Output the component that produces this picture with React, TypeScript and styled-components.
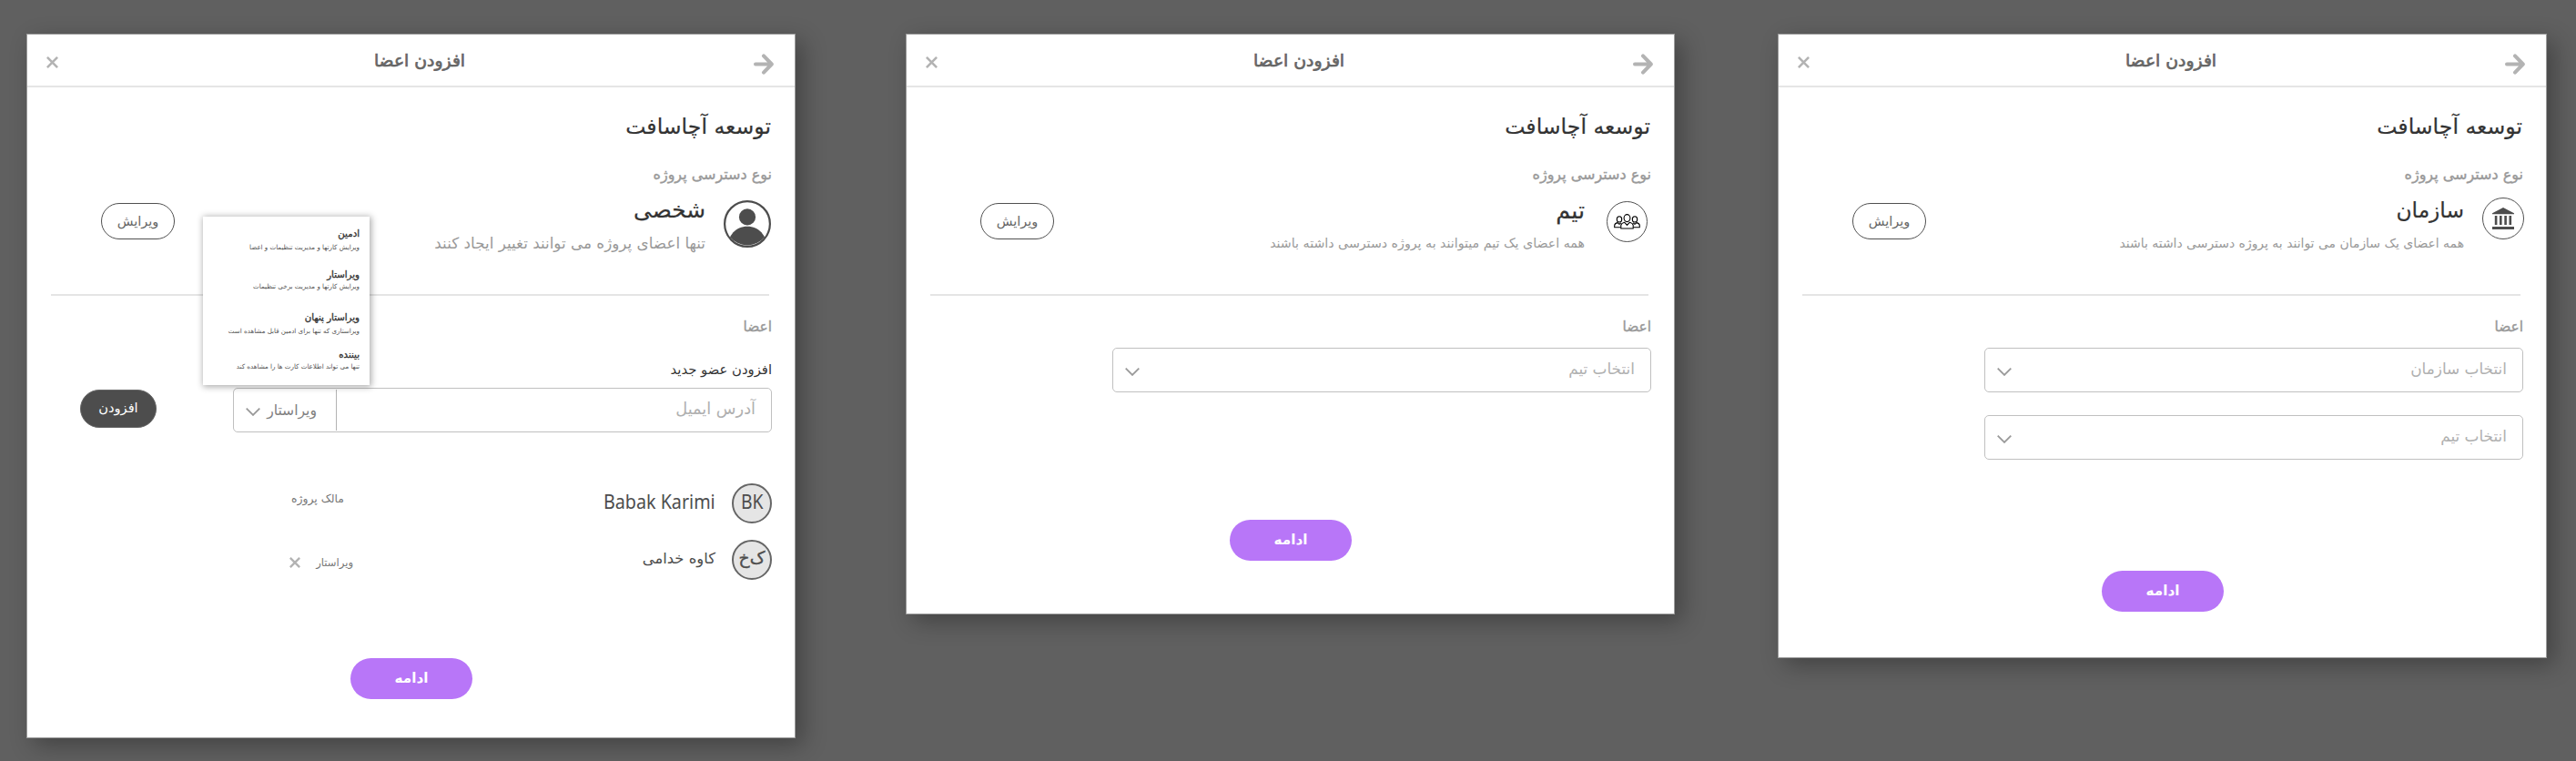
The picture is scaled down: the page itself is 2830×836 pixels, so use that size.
import React from "react";
import styled, { createGlobalStyle } from "styled-components";

const GlobalStyle = createGlobalStyle`
  *, *::before, *::after { box-sizing: border-box; }
  html, body { margin: 0; background: #606060; }
  body { font-family: "DejaVu Sans", sans-serif; }
  button { font-family: inherit; margin: 0; padding: 0; cursor: pointer; }
`;

const Board = styled.main`
  display: flex;
  align-items: flex-start;
  width: 2830px;
  height: 836px;
  padding: 37px 0 0 29px;
  background: #606060;
  overflow: hidden;
`;

const Card = styled.section<{ $height: number; $gap?: number }>`
  display: flex;
  flex-direction: column;
  flex: none;
  width: 845px;
  height: ${(p) => p.$height}px;
  margin-left: ${(p) => p.$gap ?? 0}px;
  background: #fff;
  background-clip: padding-box;
  border: 1px solid #9c9c9c;
  box-shadow: 8px 8px 24px rgba(0, 0, 0, 0.3);
`;

const Header = styled.header`
  display: flex;
  align-items: center;
  flex: none;
  height: 58px;
  padding: 0 23px 0 21px;
  border-bottom: 2px solid #e5e5e5;
`;

const HeaderTitle = styled.h1`
  flex: 1;
  margin: 0;
  padding: 1px 0 0 30px;
  text-align: center;
  font-size: 18.8px;
  font-weight: 400;
  line-height: 28px;
  color: #666;
  -webkit-text-stroke: 0.7px #666;
`;

const IconButton = styled.button<{ $drop?: number }>`
  display: flex;
  border: 0;
  background: none;
  margin-top: ${(p) => p.$drop ?? 0}px;
`;

const Body = styled.div`
  display: flex;
  flex-direction: column;
  flex: 1;
  padding: 25px 25px 0 26px;
`;

const ProjectName = styled.h2`
  margin: 0;
  padding-right: 1px;
  font-size: 23.6px;
  font-weight: 400;
  line-height: 36px;
  color: #333;
  -webkit-text-stroke: 0.2px #333;
`;

const Label = styled.div<{ $size: number; $top: number; $dark?: boolean }>`
  margin-top: ${(p) => p.$top}px;
  font-size: ${(p) => p.$size}px;
  line-height: 20px;
  color: ${(p) => (p.$dark ? "#333" : "#999")};
  -webkit-text-stroke: ${(p) => (p.$dark ? "0" : "0.4px #999")};
`;

const AccessRow = styled.div`
  display: flex;
  align-items: flex-start;
  height: 121px;
`;

const AccessIcon = styled.span<{ $top: number; $start: number; $end: number }>`
  display: flex;
  flex: none;
  margin-top: ${(p) => p.$top}px;
  margin-inline-start: ${(p) => p.$start}px;
  margin-inline-end: ${(p) => p.$end}px;
`;

const RoundFrame = styled.span<{ $size: number }>`
  display: flex;
  align-items: center;
  justify-content: center;
  width: ${(p) => p.$size}px;
  height: ${(p) => p.$size}px;
  border: 1px solid #505050;
  border-radius: 50%;
`;

const AccessText = styled.div`
  padding-top: 13px;
  white-space: nowrap;
`;

const AccessName = styled.div<{ $size: number }>`
  font-size: ${(p) => p.$size}px;
  line-height: 32px;
  color: #333;
  -webkit-text-stroke: 0.2px #333;
`;

const AccessHint = styled.div<{ $size: number }>`
  margin-top: 8px;
  font-size: ${(p) => p.$size}px;
  line-height: 24px;
  color: #999;
`;

const EditButton = styled.button`
  width: 81px;
  height: 40px;
  margin: 21px auto 0 55px;
  border: 1px solid #505050;
  border-radius: 20px;
  background: #fff;
  color: #666;
  font-size: 14.5px;
  line-height: 20px;
`;

const Divider = styled.hr`
  width: calc(100% - 3px);
  height: 2px;
  margin: 0 3px 0 0;
  border: 0;
  background: #e5e5e5;
`;

const Field = styled.div<{ $top: number }>`
  display: flex;
  align-items: stretch;
  flex: none;
  width: 592px;
  height: 49px;
  margin-top: ${(p) => p.$top}px;
  border: 1px solid #c0c0c0;
  border-radius: 5px;
  background: #fff;
`;

const Placeholder = styled.span<{ $size: number; $lift: number }>`
  flex: 1;
  padding-inline-start: 17px;
  padding-bottom: ${(p) => p.$lift}px;
  align-self: center;
  font-size: ${(p) => p.$size}px;
  line-height: 30px;
  color: #b0b0b0;
`;

const ChevronBox = styled.span`
  display: flex;
  align-items: center;
  padding: 3px 0 0 13px;
`;

const InviteRow = styled.div`
  display: flex;
  align-items: flex-start;
  justify-content: space-between;
  padding-left: 32px;
`;

const AddButton = styled.button`
  width: 84px;
  height: 42px;
  margin-top: 12px;
  border: 1px solid #666;
  border-radius: 21px;
  background: #4d4d4d;
  color: #fff;
  font-size: 14.6px;
  padding-bottom: 3px;
`;

const RoleSelect = styled.div`
  position: relative;
  display: flex;
  align-items: center;
  justify-content: space-between;
  width: 113px;
  margin: 1px 0;
  padding-right: 21px;
  border-right: 1px solid #b3b3b3;
  font-size: 15.6px;
  line-height: 24px;
  color: #808080;
`;

const RoleMenu = styled.ul`
  position: absolute;
  left: -34px;
  bottom: 50px;
  width: 183px;
  height: 185px;
  margin: 0;
  padding: 11px 11px 0 0;
  list-style: none;
  background: #fff;
  box-shadow: 1px 1px 7px 1px rgba(0, 0, 0, 0.33);
`;

const RoleItem = styled.li<{ $height: number; $hintTop: number }>`
  height: ${(p) => p.$height}px;
  white-space: nowrap;

  strong {
    display: block;
    font-size: 10.2px;
    font-weight: 400;
    line-height: 16px;
    color: #333;
    -webkit-text-stroke: 0.35px #333;
  }

  small {
    display: block;
    margin-top: ${(p) => p.$hintTop}px;
    font-size: 7.1px;
    line-height: 12px;
    color: #555;
  }
`;

const Members = styled.div`
  display: flex;
  flex-direction: column;
  gap: 18px;
  margin-top: 56px;
`;

const Member = styled.div`
  display: flex;
  align-items: center;
  height: 44px;
`;

const Avatar = styled.span<{ $latin?: boolean }>`
  display: flex;
  align-items: center;
  justify-content: center;
  flex: none;
  width: 44px;
  height: 44px;
  border: 2px solid #666;
  border-radius: 50%;
  background: #e5e5e5;
  color: #4d4d4d;
  font-family: ${(p) => (p.$latin ? '"Noto Sans", sans-serif' : '"DejaVu Sans", sans-serif')};
  font-size: ${(p) => (p.$latin ? 22.5 : 18.8)}px;
  line-height: 30px;
  -webkit-text-stroke: ${(p) => (p.$latin ? "0" : "0.4px #4d4d4d")};

  span {
    flex: none;
    transform: scaleX(${(p) => (p.$latin ? 0.86 : 1)});
    padding-bottom: ${(p) => (p.$latin ? 4 : 5)}px;
  }
`;

const MemberName = styled.span<{ $latin?: boolean }>`
  flex: 1;
  padding-inline-start: 18px;
  color: #4d4d4d;
  font-family: ${(p) => (p.$latin ? '"Noto Sans", sans-serif' : '"DejaVu Sans", sans-serif')};
  font-size: ${(p) => (p.$latin ? 21.8 : 16.4)}px;
  line-height: 30px;
  padding-bottom: ${(p) => (p.$latin ? 4 : 3)}px;

  span {
    display: inline-block;
    transform: scaleX(${(p) => (p.$latin ? 0.905 : 1)});
    transform-origin: right center;
  }
`;

const MemberRole = styled.span<{ $size: number; $start: number; $shift: number }>`
  display: flex;
  align-items: center;
  gap: 17px;
  width: 332px;
  padding-inline-start: ${(p) => p.$start}px;
  margin-top: ${(p) => p.$shift}px;
  font-size: ${(p) => p.$size}px;
  line-height: 20px;
  color: #777;
`;

const Footer = styled.footer<{ $bottom: number }>`
  display: flex;
  justify-content: center;
  margin-top: auto;
  padding-bottom: ${(p) => p.$bottom}px;
`;

const ContinueButton = styled.button`
  width: 134px;
  height: 45px;
  padding-bottom: 1px;
  border: 0;
  border-radius: 22.5px;
  background: #b876f8;
  color: #fff;
  font-size: 15.2px;
  font-weight: 700;
`;

const ArrowIcon = () => (
  <svg width="22" height="23" viewBox="0 0 22 23" fill="none" stroke="#b3b3b3" strokeWidth="4" strokeLinecap="round" strokeLinejoin="round">
    <path d="M2 11.5H19M11 2.4L19.8 11.5L11 20.6" />
  </svg>
);

const CloseIcon = ({ size }: { size: number }) => (
  <svg width={size} height={size} viewBox="0 0 13 13" stroke="#b3b3b3" strokeWidth="2.6">
    <path d="M0.9 0.9L12.1 12.1M12.1 0.9L0.9 12.1" />
  </svg>
);

const ChevronIcon = () => (
  <svg width="16" height="9" viewBox="0 0 16 9" fill="none" stroke="#999" strokeWidth="1.8">
    <path d="M0.7 0.7L8 7.9L15.3 0.7" />
  </svg>
);

const PersonIcon = () => (
  <svg width="52" height="52" viewBox="0 0 52 52">
    <circle cx="26" cy="26" r="24.9" fill="#fff" stroke="#4d4d4d" strokeWidth="2.2" />
    <circle cx="26" cy="18.4" r="9.1" fill="#4d4d4d" />
    <path d="M7 40.5C11.5 32 18 28.8 26 28.8S40.5 32 45 40.5A24.6 24.6 0 0 1 7 40.5Z" fill="#4d4d4d" />
  </svg>
);

const TeamIcon = () => (
  <svg width="29" height="17" viewBox="0 0 29 17" fill="none" stroke="#000" strokeWidth="1.1" strokeLinejoin="round">
    <ellipse cx="14.5" cy="4.6" rx="3.4" ry="4" />
    <ellipse cx="6" cy="5.9" rx="2.7" ry="3.1" />
    <ellipse cx="23" cy="5.9" rx="2.7" ry="3.1" />
    <path d="M7.8 16V12.4C8.1 10.6 9.6 9.9 11.7 9.3L14.5 12.4L17.3 9.3C19.4 9.9 20.9 10.6 21.2 12.4V16Z" />
    <path d="M7.6 14.8H0.7V12.6C0.9 10.9 2.3 10 4 9.6L6 11.4L7.8 9.8" />
    <path d="M21.4 14.8H28.3V12.6C28.1 10.9 26.7 10 25 9.6L23 11.4L21.2 9.8" />
  </svg>
);

const BankIcon = () => (
  <svg width="24" height="24" viewBox="0 0 24 24" fill="#4d4d4d">
    <path d="M12 0L24 6.2V7.2H0V6.2ZM2.8 9H5.4V19H2.8ZM8 9H10.6V19H8ZM13.3 9H15.9V19H13.3ZM18.5 9H21.1V19H18.5ZM0 21H24V24H0Z" />
  </svg>
);

const roles = [
  { name: "ادمین", hint: "ویرایش کارتها و مدیریت تنظیمات و اعضا", height: 45, hintTop: 1 },
  { name: "ویراستار", hint: "ویرایش کارتها و مدیریت برخی تنظیمات", height: 47, hintTop: -1 },
  { name: "ویراستار پنهان", hint: "ویراستاری که تنها برای ادمین قابل مشاهده است", height: 40.5, hintTop: 1 },
  { name: "بیننده", hint: "تنها می تواند اطلاعات کارت ها را مشاهده کند", height: 40, hintTop: -1 },
];

type DialogProps = {
  height: number;
  gap?: number;
  footer: number;
  access: string;
  accessSize: number;
  hint: string;
  hintSize: number;
  icon: React.ReactNode;
  children: React.ReactNode;
};

const Dialog = ({ height, gap, footer, access, accessSize, hint, hintSize, icon, children }: DialogProps) => (
  <Card dir="rtl" $height={height} $gap={gap}>
    <Header>
      <IconButton $drop={8} aria-label="بازگشت">
        <ArrowIcon />
      </IconButton>
      <HeaderTitle>افزودن اعضا</HeaderTitle>
      <IconButton $drop={4} aria-label="بستن">
        <CloseIcon size={13} />
      </IconButton>
    </Header>
    <Body>
      <ProjectName>توسعه آچاسافت</ProjectName>
      <Label $size={16} $top={25}>نوع دسترسی پروژه</Label>
      <AccessRow>
        {icon}
        <AccessText>
          <AccessName $size={accessSize}>{access}</AccessName>
          <AccessHint $size={hintSize}>{hint}</AccessHint>
        </AccessText>
        <EditButton>ویرایش</EditButton>
      </AccessRow>
      <Divider />
      <Label $size={15.4} $top={24}>اعضا</Label>
      {children}
      <Footer $bottom={footer}>
        <ContinueButton>ادامه</ContinueButton>
      </Footer>
    </Body>
  </Card>
);

const SelectField = ({ label, top }: { label: string; top: number }) => (
  <Field $top={top}>
    <Placeholder $size={16.9} $lift={3}>{label}</Placeholder>
    <ChevronBox>
      <ChevronIcon />
    </ChevronBox>
  </Field>
);

export default function App() {
  return (
    <>
      <GlobalStyle />
      <Board dir="ltr">
        <Dialog
          height={774}
          footer={42}
          access="شخصی"
          accessSize={24.8}
          hint="تنها اعضای پروژه می توانند تغییر ایجاد کنند"
          hintSize={16.8}
          icon={
            <AccessIcon $top={18} $start={1} $end={20}>
              <PersonIcon />
            </AccessIcon>
          }
        >
          <Label $size={14.8} $top={27} $dark>افزودن عضو جدید</Label>
          <InviteRow>
            <Field $top={10}>
              <Placeholder $size={17.8} $lift={4}>آدرس ایمیل</Placeholder>
              <RoleSelect>
                ویراستار
                <ChevronBox>
                  <ChevronIcon />
                </ChevronBox>
                <RoleMenu>
                  {roles.map((r) => (
                    <RoleItem key={r.name} $height={r.height} $hintTop={r.hintTop}>
                      <strong>{r.name}</strong>
                      <small>{r.hint}</small>
                    </RoleItem>
                  ))}
                </RoleMenu>
              </RoleSelect>
            </Field>
            <AddButton>افزودن</AddButton>
          </InviteRow>
          <Members>
            <Member>
              <Avatar $latin><span>BK</span></Avatar>
              <MemberName $latin><span>Babak Karimi</span></MemberName>
              <MemberRole $size={12.4} $start={10} $shift={-10}>مالک پروژه</MemberRole>
            </Member>
            <Member>
              <Avatar><span>ک‌خ</span></Avatar>
              <MemberName><span>کاوه خدامی</span></MemberName>
              <MemberRole $size={11.6} $start={0} $shift={6}>
                ویراستار
                <CloseIcon size={12} />
              </MemberRole>
            </Member>
          </Members>
        </Dialog>

        <Dialog
          height={638}
          gap={121}
          footer={58}
          access="تیم"
          accessSize={25.5}
          hint="همه اعضای یک تیم میتوانند به پروژه دسترسی داشته باشند"
          hintSize={14.2}
          icon={
            <AccessIcon $top={19} $start={4} $end={24}>
              <RoundFrame $size={45}>
                <TeamIcon />
              </RoundFrame>
            </AccessIcon>
          }
        >
          <SelectField label="انتخاب تیم" top={13} />
        </Dialog>

        <Dialog
          height={686}
          gap={113}
          footer={50}
          access="سازمان"
          accessSize={23.3}
          hint="همه اعضای یک سازمان می توانند به پروژه دسترسی داشته باشند"
          hintSize={13.95}
          icon={
            <AccessIcon $top={15} $start={-1} $end={20}>
              <RoundFrame $size={46}>
                <BankIcon />
              </RoundFrame>
            </AccessIcon>
          }
        >
          <SelectField label="انتخاب سازمان" top={13} />
          <SelectField label="انتخاب تیم" top={25} />
        </Dialog>
      </Board>
    </>
  );
}
